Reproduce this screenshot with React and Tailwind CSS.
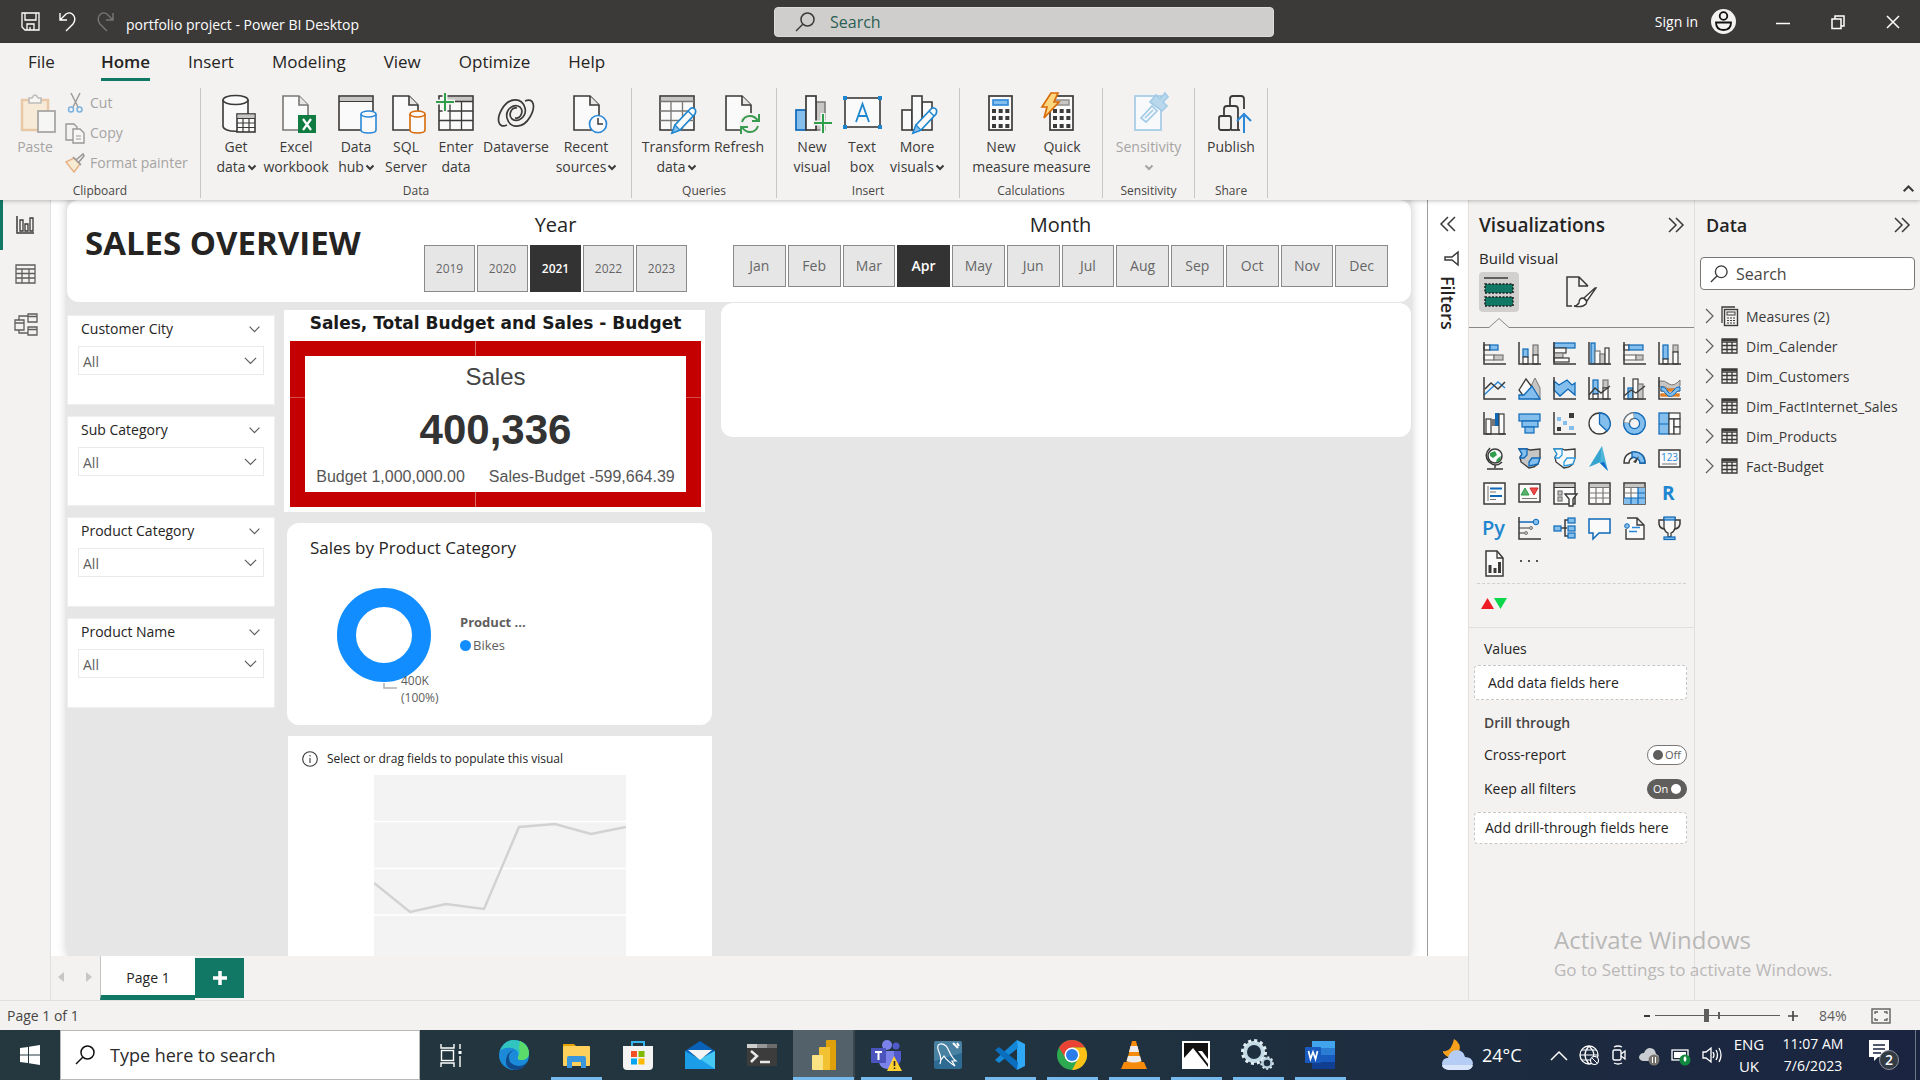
import React from "react";

const D = "#3b3a39";
const B = "#0f69b8";
const L = "#83beec";
const G = "#c8c6c4";
const M = "#797775";
const W = "#fafafa";

const Svg = ({ w = 40, h = 40, box, children, className = "" }) => (
  <svg
    width={w}
    height={h}
    viewBox={box || `0 0 ${w} ${h}`}
    fill="none"
    aria-hidden="true"
    className={"block shrink-0 overflow-visible " + className}
  >
    {children}
  </svg>
);

const Chevron = ({ w = 8, h = 5, color = D, sw = 2 }) => (
  <Svg w={w} h={h} box="0 0 8 5">
    <path d="M0.5 0.5L4 4L7.5 0.5" stroke={color} strokeWidth={sw} vectorEffect="non-scaling-stroke" />
  </Svg>
);

const Magnifier = ({ size = 20, color = D }) => (
  <Svg w={size} h={size} box="0 0 20 20">
    <circle cx="12.5" cy="7.5" r="6.5" stroke={color} strokeWidth="1.5" />
    <path d="M8 12L1 19" stroke={color} strokeWidth="1.5" />
  </Svg>
);

/* ---------- ribbon icons ---------- */
const Doc = ({ x = 6, stroke = D }) => (
  <g stroke={stroke} strokeWidth="1.6">
    <path d={`M${x + 1} 3H${x + 17}L${x + 26} 12V37H${x + 1}Z`} fill={W} />
    <path d={`M${x + 17} 3V12H${x + 26}`} fill="#e8e6e4" />
  </g>
);

const Cyl = ({ x, y, w, h, stroke, fill = W }) => (
  <g stroke={stroke} strokeWidth="1.6" fill={fill}>
    <path d={`M${x} ${y + 3}V${y + h - 3}c0 4 ${w} 4 ${w} 0V${y + 3}`} />
    <ellipse cx={x + w / 2} cy={y + 3} rx={w / 2} ry="3" />
  </g>
);

const Pencil = () => (
  <g>
    <path d="M34 16L19 32L16 40L24 37L39 21Q41 16 37 15Q35 14.500 34 16Z" fill={W} stroke="#1e86cf" strokeWidth="1.7" />
    <path d="M19 32L24 37L16 40Z" fill={L} stroke="#1e86cf" strokeWidth="1.2" />
    <path d="M32 18L37 23" stroke="#1e86cf" strokeWidth="1.4" />
  </g>
);

const CalcBody = ({ x = 7, w = 25, screen = "#2b88d8" }) => (
  <g>
    <rect x={x + 1} y="3" width={w - 2} height="34" fill={W} stroke={D} strokeWidth="1.7" />
    <rect x={x + 5} y="7" width={w - 10} height="5" fill={screen === "#979593" ? G : L} stroke={screen} strokeWidth="1.6" />
    {[16, 23, 31].map((y) =>
      [0, 1, 2].map((c) => <rect key={`${y}-${c}`} x={x + 4 + c * ((w - 5) / 3)} y={y} width="4" height="4" fill={D} />)
    )}
  </g>
);

const icons = {
  paste: (
    <Svg className="opacity-50">
      <g transform="translate(2 0)">
        <rect x="5" y="7" width="26" height="30" fill="#fbe6c0" stroke="#e0a15c" strokeWidth="2.5" />
        <path d="M12 10V5H15Q18 -1 21 5H24V10Z" fill={W} stroke="#8a8886" strokeWidth="1.6" />
        <rect x="21" y="18" width="17" height="21" fill={W} stroke="#605e5c" strokeWidth="1.8" />
      </g>
    </Svg>
  ),
  getdata: (
    <Svg>
      <path d="M7 7V33c0 7 25 7 25 0V7" fill={W} stroke={D} strokeWidth="1.6" />
      <ellipse cx="19.500" cy="7" rx="12.500" ry="4.500" fill={W} stroke={D} strokeWidth="1.6" />
      <rect x="21" y="21" width="18" height="18" fill={W} stroke={D} strokeWidth="1.6" />
      <rect x="21.500" y="21.500" width="17" height="3.500" fill={G} />
      <path d="M21 25.500H39M21 30H39M21 34.500H39M27 25V39M33 25V39" stroke={D} strokeWidth="1.2" />
    </Svg>
  ),
  excel: (
    <Svg>
      <Doc x={6} stroke="#797775" />
      <rect x="22" y="22" width="18" height="18" fill="#107c41" />
      <path d="M27 26L35 37M35 26L27 37" stroke="white" strokeWidth="2.2" />
    </Svg>
  ),
  hub: (
    <Svg>
      <rect x="3" y="3" width="34" height="34" fill={W} stroke={D} strokeWidth="1.6" />
      <rect x="4" y="4" width="32" height="4" fill={G} />
      <path d="M3 8.500H37" stroke={D} strokeWidth="1.2" />
      <Cyl x={25} y={18} w={15} h={22} stroke="#2b88d8" />
    </Svg>
  ),
  sql: (
    <Svg>
      <Doc x={6} />
      <Cyl x={24} y={18} w={15} h={22} stroke="#d86b0a" />
    </Svg>
  ),
  enter: (
    <Svg>
      <rect x="3" y="3" width="34" height="34" fill={W} stroke={D} strokeWidth="1.6" />
      <rect x="10" y="4" width="26" height="4" fill={G} />
      <path d="M3 8.500H37M3 18H37M3 27.500H37M14 9V37M25.500 9V37" stroke={D} strokeWidth="1.3" />
      <path d="M9 -1V19M-1 9H19" stroke="#f3f2f1" strokeWidth="5" />
      <path d="M9 0V18M0 9H18" stroke="#2f9e4a" strokeWidth="2" />
    </Svg>
  ),
  dataverse: (
    <Svg>
      <g stroke={D} strokeWidth="1.7">
        <path d="M11 32C2 36 0 26 6 16C13 4 26 4 29 15C31 24 22 30 16 26C12 22 15 14 21 15" />
        <path d="M29 8C38 4 40 14 34 24C27 36 14 36 11 25C9 16 18 10 24 14C28 18 25 26 19 25" />
      </g>
    </Svg>
  ),
  recent: (
    <Svg>
      <Doc x={7} />
      <circle cx="32" cy="31" r="8.500" fill={W} stroke="#2b88d8" strokeWidth="1.7" />
      <path d="M32 25V31H37" stroke={D} strokeWidth="1.5" />
    </Svg>
  ),
  transform: (
    <Svg>
      <rect x="4" y="3" width="34" height="34" fill={W} stroke={D} strokeWidth="1.6" />
      <rect x="5" y="4" width="32" height="4" fill={G} />
      <path d="M4 8.500H38M4 18H38M4 27.500H38M15 9V37M26.500 9V37" stroke={M} strokeWidth="1.3" />
      <Pencil />
    </Svg>
  ),
  refresh: (
    <Svg>
      <Doc x={6} />
      <circle cx="31" cy="31" r="11" fill="#f3f2f1" />
      <path d="M23 29Q25 23 31 23Q36 23 39 28M39 33Q37 39 31 39Q26 39 23 34" stroke="#3a9a50" strokeWidth="2" />
      <path d="M40 21V28H33M22 41V34H29" stroke="#3a9a50" strokeWidth="2" />
    </Svg>
  ),
  newvisual: (
    <Svg>
      <rect x="24" y="9" width="9" height="28" fill={G} stroke={M} strokeWidth="1.5" />
      <rect x="4" y="17" width="10" height="20" fill={L} stroke={B} strokeWidth="1.7" />
      <rect x="14" y="3" width="10" height="34" fill={W} stroke={D} strokeWidth="1.7" />
      <path d="M31 20V40M21 30H40" stroke="#f3f2f1" strokeWidth="5" />
      <path d="M31 21V40M22 30H40" stroke="#2f9e4a" strokeWidth="2" />
    </Svg>
  ),
  textbox: (
    <Svg>
      <rect x="3" y="5" width="35" height="29" fill={W} stroke={D} strokeWidth="1.6" />
      <path d="M14 29L20.500 11L27 29M16 23H25" stroke="#1e86cf" strokeWidth="1.8" />
      {[[1, 3], [36, 3], [1, 32], [36, 32]].map(([x, y]) => (
        <rect key={`${x}-${y}`} x={x} y={y} width="4" height="4" fill="#1e86cf" />
      ))}
    </Svg>
  ),
  more: (
    <Svg>
      <rect x="25" y="9" width="10" height="28" fill={W} stroke={D} strokeWidth="1.6" />
      <rect x="5" y="17" width="10" height="20" fill={W} stroke={D} strokeWidth="1.6" />
      <rect x="15" y="3" width="10" height="34" fill={W} stroke={D} strokeWidth="1.6" />
      <Pencil />
    </Svg>
  ),
  measure: (
    <Svg>
      <CalcBody />
    </Svg>
  ),
  quick: (
    <Svg>
      <CalcBody x={7} w={25} screen="#979593" />
      <path d="M9 0H16L12 9H17L2 25L5 14H0Z" fill="#fcd77f" stroke="#d86b0a" strokeWidth="1.7" />
    </Svg>
  ),
  sensitivity: (
    <Svg>
      <g stroke="#a3cbe6" strokeWidth="1.7">
        <rect x="6" y="3" width="26" height="34" fill="#f7f9fb" />
        <path d="M12 25L23 13L28 18L17 29Z" fill="#f3f8fb" />
        <path d="M16 25L24 17" />
        <path d="M21 9L27 2L31 6L36 0L39 4L34 9L38 13L33 18Z" fill="#b9d8ec" />
      </g>
    </Svg>
  ),
  publish: (
    <Svg>
      <g stroke={D} strokeWidth="1.8">
        <path d="M19 12V6Q19 3 22 3H30Q33 3 33 6V16M13 22V16Q13 13 16 13H24Q27 13 27 16V37" />
        <rect x="8" y="23" width="12" height="14" rx="2" />
        <path d="M20 37H29" />
      </g>
      <path d="M33 40V21M26 28L33 21L40 28" stroke="#2b88d8" strokeWidth="2" />
    </Svg>
  ),
};

const ribbon = [
  {
    name: "Data",
    box: "w-[431px]",
    pad: "pl-[5px]",
    items: [
      ["getdata", "Get", "data", true, "w-[60px]"],
      ["excel", "Excel", "workbook", false, "w-[60px]"],
      ["hub", "Data", "hub", true, "w-[60px]"],
      ["sql", "SQL", "Server", false, "w-[40px]"],
      ["enter", "Enter", "data", false, "w-[60px]"],
      ["dataverse", "Dataverse", "", false, "w-[60px]"],
      ["recent", "Recent", "sources", true, "w-[80px]"],
    ],
  },
  {
    name: "Queries",
    box: "w-[145px]",
    pad: "pl-[6px]",
    items: [
      ["transform", "Transform", "data", true, "w-[76px]"],
      ["refresh", "Refresh", "", false, "w-[50px]"],
    ],
  },
  {
    name: "Insert",
    box: "w-[183px]",
    pad: "pl-[10px]",
    items: [
      ["newvisual", "New", "visual", false, "w-[50px]"],
      ["textbox", "Text", "box", false, "w-[50px]"],
      ["more", "More", "visuals", true, "w-[60px]"],
    ],
  },
  {
    name: "Calculations",
    box: "w-[143px]",
    pad: "pl-[11px]",
    items: [
      ["measure", "New", "measure", false, "w-[60px]"],
      ["quick", "Quick", "measure", false, "w-[62px]"],
    ],
  },
  { name: "Sensitivity", box: "w-[92px]", pad: "", items: [["sensitivity", "Sensitivity", "", true, "w-[91px] text-[#a6a4a2]"]] },
  { name: "Share", box: "w-[73px]", pad: "", items: [["publish", "Publish", "", false, "w-[72px]"]] },
];

const RibbonGroup = ({ name, box, pad, items, children }) => (
  <div role="group" aria-label={name} className={"flex h-[110px] shrink-0 flex-col border-r border-[#c8c6c4] " + box}>
    {children || (
      <div className={"flex items-start " + pad}>
        {items.map(([id, a, b, drop, w]) => (
          <button key={id} className={"flex shrink-0 flex-col items-center pt-[5px] text-[14px] leading-5 whitespace-nowrap " + w}>
            {icons[id]}
            <span className="mt-1">{a}</span>
            <span className="flex h-5 items-center gap-0.5">
              {b}
              {drop && <Chevron color={id === "sensitivity" ? "#a6a4a2" : D} />}
            </span>
          </button>
        ))}
      </div>
    )}
    <div className="mt-auto text-center text-[12px] leading-[14px] text-[#484644]">{name}</div>
  </div>
);

/* ---------- visualization gallery ---------- */
const Axis = () => <path d="M1 0V22H23" stroke={D} strokeWidth="1.5" />;
const R = ({ a, f = W, s = D, sw = 1.2 }) => (
  <rect x={a[0]} y={a[1]} width={a[2]} height={a[3]} fill={f} stroke={s} strokeWidth={sw} />
);

const gallery = [
  ["Stacked bar chart", <><R a={[1, 3, 6, 5]} /><R a={[7, 3, 8, 5]} f={L} s={B} /><R a={[1, 13, 10, 5]} s={M} /><R a={[11, 13, 9, 5]} f={G} s={M} /><Axis /></>],
  ["Stacked column chart", <><R a={[5, 7, 5, 8]} f={L} s={B} /><R a={[5, 15, 5, 7]} /><R a={[15, 3, 5, 10]} f={G} s={M} /><R a={[15, 13, 5, 9]} /><Axis /></>],
  ["Clustered bar chart", <><R a={[1, 1, 21, 5]} f={L} s={B} /><R a={[1, 6, 12, 5]} /><R a={[1, 11, 9, 5]} f={G} s={M} /><R a={[1, 16, 15, 4]} /><Axis /></>],
  ["Clustered column chart", <><R a={[3, 1, 4, 21]} f={L} s={B} /><R a={[7, 9, 5, 13]} s={M} /><R a={[12, 12, 5, 10]} f={G} s={M} /><R a={[17, 6, 4, 16]} /><Axis /></>],
  ["100% stacked bar chart", <><R a={[1, 3, 5, 5]} /><R a={[6, 3, 14, 5]} f={L} s={B} /><R a={[1, 13, 12, 5]} s={M} /><R a={[13, 13, 7, 5]} f={G} s={M} /><Axis /></>],
  ["100% stacked column chart", <><R a={[5, 3, 5, 14]} f={L} s={B} /><R a={[5, 17, 5, 5]} /><R a={[15, 3, 5, 7]} f={G} s={M} /><R a={[15, 10, 5, 12]} /><Axis /></>],
  ["Line chart", <><path d="M1 18L15 5L22 11" stroke="#2b88d8" strokeWidth="1.5" /><path d="M2 12L8 6L15 12L22 5" stroke={D} strokeWidth="1.5" /><Axis /></>],
  ["Area chart", <><path d="M11 13L17 1L22 11V22H16Z" fill={G} stroke={M} /><path d="M1 13L8 2L14 10L6 20Z" fill={W} stroke={D} strokeWidth="1.3" /><path d="M1 22V18L6 18L14 9L22 22Z" fill={L} stroke={B} strokeWidth="1.3" /></>],
  ["Stacked area chart", <><path d="M1 4L6 8L14 3L19 8L22 6V18L15 12L7 19L1 13Z" fill={L} stroke={B} strokeWidth="1.3" /><Axis /></>],
  ["Line and stacked column chart", <><R a={[5, 3, 5, 14]} f={L} s={B} /><R a={[5, 17, 5, 5]} /><R a={[15, 3, 5, 8]} f={G} s={M} /><R a={[15, 11, 5, 11]} /><path d="M1 18L7 11L13 16L22 9" stroke={D} strokeWidth="1.4" /><Axis /></>],
  ["Line and clustered column chart", <><R a={[5, 11, 5, 11]} f={L} s={B} /><R a={[10, 2, 5, 20]} /><R a={[15, 7, 5, 15]} f={G} s={M} /><path d="M1 19L8 13L13 16L22 9" stroke={D} strokeWidth="1.4" /><Axis /></>],
  ["Ribbon chart", <><path d="M1 4Q7 3 11 7Q16 10 22 3V9Q16 15 11 13Q7 8 1 10Z" fill={G} stroke={M} /><R a={[3, 12, 18, 2]} f="#f8a94b" s="#d86b0a" /><R a={[3, 17, 18, 2]} f="#f8a94b" s="#d86b0a" /><path d="M3 10Q7 9 10 15Q12 18 15 14Q18 9 22 10V14Q19 13 17 17Q12 22 8 17Q6 13 3 14Z" fill={L} stroke={B} /><Axis /></>],
  ["Waterfall chart", <><R a={[3, 7, 5, 15]} /><rect x="8" y="7" width="5" height="7" fill={M} /><rect x="12" y="1" width="4" height="13" fill={B} /><R a={[16, 2, 5, 20]} /><Axis /></>],
  ["Funnel chart", <><R a={[1, 2, 21, 7]} f={L} s={B} /><R a={[4, 9, 16, 6]} f={L} s={B} /><R a={[7, 15, 9, 6]} f={L} s={B} /></>],
  ["Scatter chart", <><rect x="4" y="5" width="4" height="4" fill={L} /><rect x="10" y="9" width="4" height="4" fill={L} /><rect x="16" y="14" width="5" height="4" fill={L} /><rect x="16" y="1" width="5" height="5" fill={D} /><rect x="4" y="15" width="4" height="4" fill={D} /><Axis /></>],
  ["Pie chart", <><circle cx="11.500" cy="11.500" r="10.500" fill={W} stroke={D} strokeWidth="1.3" /><path d="M11.500 1V12L19 19A10.500 10.500 0 0 0 11.500 1Z" fill={L} stroke={B} strokeWidth="1.3" /></>],
  ["Donut chart", <><circle cx="11.500" cy="11.500" r="8" stroke={B} strokeWidth="7" /><circle cx="11.500" cy="11.500" r="8" stroke={L} strokeWidth="4.500" /><path d="M3.500 11A8 8 0 0 1 11 3.500" stroke={M} strokeWidth="7" /><path d="M3.500 10.500A8 8 0 0 1 10.500 3.500" stroke={W} strokeWidth="4.500" /></>],
  ["Treemap", <><R a={[1, 1, 10, 21]} f={L} s={B} /><path d="M1 12H11" stroke={B} /><R a={[11, 1, 11, 6]} /><R a={[11, 7, 5, 15]} s={D} /><R a={[16, 7, 6, 8]} /><R a={[16, 15, 6, 7]} /></>],
  ["Map", <><circle cx="12" cy="9" r="7" fill={W} stroke={D} strokeWidth="1.5" /><path d="M7 6L12 4L14 8L10 11L7 9ZM14 12L18 9L17 14L13 15Z" fill="#2f9e4a" /><path d="M7 1Q0 8 6 15Q13 21 19 15M12 18V21M4 22H20" stroke={D} strokeWidth="1.5" /></>],
  ["Filled map", <><path d="M1 2H9L12 3L22 2V11L20 17L16 20L11 21L3 15L2 10L4 7Z" fill={G} stroke={D} strokeWidth="1.3" /><path d="M1 2H9V8L6 11H2L4 7ZM11 19V15L14 11H22L20 17L16 18Z" fill={L} stroke={B} strokeWidth="1.3" /></>],
  ["Shape map", <><path d="M1 2H9L12 3L22 2V11L20 17L16 20L11 21L3 15L2 10L4 7Z" fill={W} stroke={D} strokeWidth="1.3" /><path d="M1 2H9V8L6 11H2L4 7ZM11 19V15L14 11H22L20 17L16 18Z" fill={W} stroke="#2b9be0" strokeWidth="1.3" /></>],
  ["Azure map", <><path d="M14 -1L1 20L13 15Z" fill="#35a5cf" /><path d="M14 -1L20 24L12 16Z" fill="#4bb5dc" /><path d="M12 16L16 15L20 24Z" fill="#0f69c8" /></>],
  ["Gauge", <><path d="M1 16Q1 6 11.500 5Q22 6 22 16H17Q17 11 11.500 10Q6 11 6 16Z" fill={W} stroke={D} strokeWidth="1.4" /><path d="M9 5Q21 4 22 16H17Q17 11 9 10Z" fill={L} stroke={B} strokeWidth="1.4" /><path d="M10 15L16 9L13 16Z" fill={D} /></>],
  ["Card", <><R a={[1, 3, 21, 17]} sw={1.5} /><text x="11.500" y="14" fontSize="10" textAnchor="middle" fill="#2b88d8" fontFamily="Open Sans, sans-serif">123</text><path d="M4 17H19" stroke={M} /></>],
  ["Multi-row card", <><R a={[1, 1, 21, 21]} sw={1.5} /><path d="M5 4V19" stroke={M} /><path d="M7 6.500H19M7 14H19" stroke={B} strokeWidth="2" /><path d="M7 10H13M7 17.500H13" stroke={M} /></>],
  ["KPI", <><R a={[1, 2, 21, 18]} sw={1.5} /><path d="M7 6L11 13H3Z" fill="#5bb06e" stroke="#2f9e4a" /><path d="M12 6H20L16 13Z" fill="#f04a4a" stroke="#d02a2a" /><path d="M4 16.500H19" stroke={M} /></>],
  ["Slicer", <><R a={[1, 1, 21, 21]} sw={1.5} /><rect x="2" y="2" width="19" height="3" fill={G} /><path d="M1 5.500H22" stroke={D} /><R a={[5, 9, 4, 4]} f={G} s={M} /><R a={[5, 15, 4, 4]} f={G} s={M} /><path d="M12 12H24L20 17V24H16V17Z" fill={W} stroke={D} strokeWidth="1.4" /></>],
  ["Table", <><R a={[1, 1, 21, 21]} sw={1.5} /><rect x="2" y="2" width="19" height="3" fill={G} /><path d="M1 5.500H22M1 11H22M1 16H22M8 5V22M15 5V22" stroke={M} strokeWidth="1.2" /></>],
  ["Matrix", <><R a={[1, 1, 21, 21]} sw={1.5} /><rect x="2" y="2" width="19" height="3" fill={G} /><path d="M15 6H22V22H1V16H15Z" fill={L} /><path d="M1 5.500H22M1 11H15M8 5V16" stroke={M} strokeWidth="1.2" /><path d="M15 5V22M1 16H22M8 16V22M15 11H22" stroke={B} strokeWidth="1.2" /></>],
  ["R script visual", <text x="4" y="18" fontSize="19" fontWeight="700" fill="#1e86cf" fontFamily="Open Sans, sans-serif">R</text>],
  ["Python visual", <text x="-1" y="18" fontSize="20" fontWeight="600" fill="#1e86cf" fontFamily="Open Sans, sans-serif">Py</text>],
  ["Key influencers", <><path d="M1 5H15" stroke={B} strokeWidth="1.5" /><path d="M1 11H12M1 16H8" stroke={M} strokeWidth="1.3" /><circle cx="18" cy="5" r="2.800" fill={L} stroke={B} /><circle cx="13" cy="11" r="1.500" fill={G} stroke={M} /><circle cx="8" cy="16" r="1.500" fill={G} stroke={M} /><Axis /></>],
  ["Decomposition tree", <><path d="M8 11H14M18 3H12V19H18" stroke={D} strokeWidth="1.5" /><R a={[1, 9, 7, 5]} f={L} s={B} /><R a={[15, 1, 7, 5]} f={L} s={B} /><R a={[15, 9, 7, 5]} f={L} s={B} /><R a={[15, 16, 7, 5]} f={L} s={B} /></>],
  ["Q&A", <path d="M1 2H22V16H11L5 22V16H1Z" fill={W} stroke={B} strokeWidth="1.5" />],
  ["Smart narrative", <><path d="M4 1H14L21 8V22H3V12M14 1V8H21" fill={W} stroke={D} strokeWidth="1.4" /><circle cx="4" cy="9" r="2.300" fill={L} stroke={B} /><path d="M9 10.500H17M6 14.500H14" stroke="#2b88d8" strokeWidth="1.3" /></>],
  ["Goals", <><path d="M6 3H1V7Q2 12 7 12M17 3H22V7Q21 12 16 12" stroke={D} strokeWidth="1.5" /><path d="M6 1H17V11Q16 15 13 16V20H10V16Q7 15 6 11Z" fill={W} stroke={D} strokeWidth="1.3" /><R a={[6, 0, 11, 3]} f={L} s={B} /><R a={[6, 20, 11, 2.5]} f={L} s={B} /></>],
  ["Paginated report", <><path d="M3 -1H14L20 6V24H3Z" fill={W} stroke={D} strokeWidth="1.5" /><path d="M14 -1V6H20" stroke={D} strokeWidth="1.3" /><path d="M7 21V13M12 21V16M16.500 21V10" stroke={D} strokeWidth="3" /></>],
  ["Get more visuals", <g fill="#201f1e"><circle cx="3" cy="9" r="1" /><circle cx="11" cy="9" r="1" /><circle cx="19" cy="9" r="1" /></g>],
];

const TableIcon = () => (
  <Svg w={17} h={16}>
    <path d="M1 1H16V15H1ZM1 4H16M1 7.500H16M1 11.500H16M6 4V15M11 4V15" stroke={D} strokeWidth="1.3" />
    <path d="M1 2H16" stroke={D} strokeWidth="2" />
  </Svg>
);

const MeasureIcon = () => (
  <Svg w={17} h={20}>
    <path d="M1 17V1H14" stroke={D} strokeWidth="1.3" />
    <rect x="3.500" y="3.500" width="13" height="16" stroke={D} strokeWidth="1.4" />
    <rect x="6" y="6" width="8" height="3" stroke={D} />
    <path d="M6 12H14M6 14.500H14M6 17H14" stroke={D} strokeDasharray="2 1" strokeWidth="1.2" />
  </Svg>
);

const Double = ({ left }) => (
  <Svg w={16} h={16}>
    <path d={left ? "M8 1L1 8L8 15M15 1L8 8L15 15" : "M1 1L8 8L1 15M8 1L15 8L8 15"} stroke={D} strokeWidth="1.5" />
  </Svg>
);

/* ---------- report canvas ---------- */
const SlicerCard = ({ name }) => (
  <section className="h-[90px] border border-[#efefef] bg-white px-[10px] pt-0.5">
    <div className="flex items-center justify-between pr-[3px] pl-[3px]">
      <label htmlFor={name} className="text-[14px] leading-[22px] text-[#252423]">
        {name}
      </label>
      <Chevron w={13} h={7} color="#605e5c" sw={1.2} />
    </div>
    <div className="relative mt-[6px] flex items-center">
      <select id={name} className="h-[29px] w-full appearance-none border border-[#eaeaea] bg-white pt-0.5 pl-1 text-[14px] text-[#605e5c]">
        <option>All</option>
      </select>
      <span className="pointer-events-none absolute right-1.5">
        <Chevron w={15} h={8} color="#605e5c" sw={1.2} />
      </span>
    </div>
  </section>
);

const pick = (on) =>
  on
    ? "border-[#333333] bg-[#333333] font-semibold text-white"
    : "border-[#8a8a8a] bg-[#e6e6e6] text-[#666666]";

const Report = () => (
  <main className="flex min-w-0 flex-1 overflow-hidden bg-white px-4">
    <div className="min-w-0 flex-1 bg-[#e6e6e6] shadow-[0_0_10px_rgba(0,0,0,0.22)]">
      <header className="flex h-[102px] items-start justify-between rounded-xl bg-white pr-[23px] pl-[18px]">
        <h1 className="mt-5 text-[33px] leading-[46px] font-bold whitespace-nowrap text-[#252423]">SALES OVERVIEW</h1>
        <div className="ml-auto mr-[46px] pt-[9px]">
          <div className="text-center text-[20px] leading-8 text-[#252423]">Year</div>
          <div className="mt-1 flex gap-0.5">
            {["2019", "2020", "2021", "2022", "2023"].map((y) => (
              <button key={y} className={"h-[47px] w-[51px] border text-[12px] " + pick(y === "2021")}>
                {y}
              </button>
            ))}
          </div>
        </div>
        <div className="w-[655px] pt-[9px]">
          <div className="text-center text-[20px] leading-8 text-[#252423]">Month</div>
          <div className="mt-1 grid grid-cols-12 gap-0.5">
            {["Jan", "Feb", "Mar", "Apr", "May", "Jun", "Jul", "Aug", "Sep", "Oct", "Nov", "Dec"].map((m) => (
              <button key={m} className={"h-[42px] border pb-0.5 text-[14px] " + pick(m === "Apr")}>
                {m}
              </button>
            ))}
          </div>
        </div>
      </header>

      <div className="flex">
        <div className="flex w-52 shrink-0 flex-col gap-[11px] pt-[13px]">
          {["Customer City", "Sub Category", "Product Category", "Product Name"].map((n) => (
            <SlicerCard key={n} name={n} />
          ))}
        </div>

        <div className="flex w-[437px] shrink-0 flex-col gap-[11px] pt-2 pl-[9px]">
          <section className="w-[421px] bg-white pr-1 pb-[5px] pl-[6px]">
            <h2 className="pb-1 text-center font-['DejaVu_Sans',sans-serif] text-[17px] leading-[27px] font-bold whitespace-nowrap text-[#1b1b1b]">
              Sales, Total Budget and Sales - Budget
            </h2>
            <div className="relative border-[15px] border-[#c40000] bg-white pt-[5px] text-center font-['Liberation_Sans',Arial,sans-serif]">
              <span className="absolute -top-[15px] left-[170px] h-[15px] w-px bg-[#dc6a6a]" />
              <span className="absolute -bottom-[15px] left-[170px] h-[15px] w-px bg-[#dc6a6a]" />
              <span className="absolute top-[41px] -left-[15px] h-px w-[15px] bg-[#d44a4a]" />
              <span className="absolute top-[41px] -right-[15px] h-px w-[15px] bg-[#d44a4a]" />
              <div className="text-[24px] leading-8 text-[#444444]">Sales</div>
              <div className="mt-[7px] text-[42px] leading-[60px] font-bold text-[#333333]">400,336</div>
              <div className="mt-[3px] flex justify-center gap-6 pb-px text-[16px] leading-7 whitespace-nowrap text-[#555555]">
                <span>Budget 1,000,000.00</span>
                <span>Sales-Budget -599,664.39</span>
              </div>
            </div>
          </section>

          <section className="ml-[3px] h-[202px] rounded-xl bg-white pt-[14px] pl-[23px]">
            <h2 className="text-[17px] leading-[22px] text-[#252423]">Sales by Product Category</h2>
            <div className="mt-[29px] flex gap-7">
              <svg width="122" height="120" viewBox="0 0 122 120" className="block overflow-visible" role="img" aria-label="Bikes 400K (100%)">
                <circle cx="74" cy="47" r="37.500" fill="none" stroke="#118dff" strokeWidth="19" />
                <path d="M74 95V100H87" fill="none" stroke="#b3b0ad" strokeWidth="1.5" />
                <g fontSize="12" fill="#605e5c" fontFamily="Open Sans, sans-serif">
                  <text x="91" y="97">400K</text>
                  <text x="91" y="114">(100%)</text>
                </g>
              </svg>
              <div className="pt-[23px] text-[13px] leading-[23px] text-[#605e5c]">
                <div className="font-bold">Product ...</div>
                <div className="flex items-center gap-0.5">
                  <span className="size-[11px] rounded-full bg-[#118dff]" />
                  Bikes
                </div>
              </div>
            </div>
          </section>

          <section className="ml-1 bg-white px-[14px] pt-[13px]">
            <div className="flex items-center gap-[9px] text-[12px] leading-5 text-[#252423]">
              <Svg w={16} h={16}>
                <circle cx="8" cy="8" r="7.300" stroke={D} strokeWidth="1.1" />
                <path d="M8 7V12M8 4V5.500" stroke={D} strokeWidth="1.1" />
              </Svg>
              Select or drag fields to populate this visual
            </div>
            <svg width="252" height="200" viewBox="0 0 252 200" className="mt-[6px] ml-[72px] block" aria-hidden="true">
              <rect width="252" height="200" fill="#f3f3f3" />
              <path d="M0 46.500H252M0 93.500H252M0 140H252" stroke="white" strokeWidth="1.500" />
              <path d="M0 108L36 137L72 129L110 134L145 52L181 49L217 59L252 52" fill="none" stroke="#d2d2d2" strokeWidth="2.500" />
            </svg>
          </section>
        </div>

        <section className="mt-px ml-[9px] h-[134px] flex-1 rounded-xl bg-white" />
      </div>
    </div>
  </main>
);

const Toggle = ({ label, on }) => (
  <label className="flex items-center justify-between">
    {label}
    <input type="checkbox" role="switch" defaultChecked={on} className="peer sr-only" />
    <span
      className={
        "flex h-5 w-10 items-center justify-between rounded-full border px-[5px] text-[11px] " +
        (on ? "border-[#605e5c] bg-[#605e5c] text-white" : "flex-row-reverse border-[#797775] bg-white text-[#605e5c]")
      }
    >
      {on ? "On" : "Off"}
      <span className={"size-[10px] rounded-full " + (on ? "bg-white" : "bg-[#605e5c]")} />
    </span>
  </label>
);

const Visualizations = () => (
  <aside className="flex w-[226px] shrink-0 flex-col border-r border-[#e1dfdd]">
    <div className="flex items-center justify-between pt-[11px] pr-[10px] pl-[10px]">
      <h2 className="text-[19px] leading-7 font-semibold">Visualizations</h2>
      <button aria-label="Collapse visualizations">
        <Double />
      </button>
    </div>
    <div className="mt-[7px] pl-[10px] text-[15px] leading-6">Build visual</div>
    <div className="mt-[2px] flex gap-[42px] pl-[10px]">
      <button aria-label="Build visual" className="flex size-10 items-center justify-center rounded-sm bg-[#d2d0ce]">
        <Svg w={30} h={32}>
          <path d="M0 2H24" stroke={D} strokeWidth="1.5" />
          <rect x="1" y="8" width="28" height="9" fill="#117865" stroke="#201f1e" strokeWidth="1.5" strokeDasharray="2 1.500" />
          <rect x="1" y="21" width="28" height="9" fill="#117865" stroke="#201f1e" strokeWidth="1.5" strokeDasharray="2 1.500" />
        </Svg>
      </button>
      <button aria-label="Format visual" className="flex size-10 items-center justify-center">
        <Svg w={32} h={32}>
          <path d="M7 30H2V1H14L23 10M14 1V10H23" stroke={D} strokeWidth="1.5" />
          <path d="M30 12L19 22L22 25L31 12Z" stroke={D} strokeWidth="1.4" fill="white" />
          <path d="M18 22Q14 22 14 27Q12 30 9 30Q17 32 21 28Q23 25 18 22Z" stroke={D} strokeWidth="1.4" fill="white" />
        </Svg>
      </button>
    </div>
    <div className="mt-[6px] flex h-[10px]">
      <svg width="41" height="10" className="block" aria-hidden="true">
        <path d="M0 9.500H20L30 0.500L40 9.500H41" fill="none" stroke="#8a8886" />
      </svg>
      <div className="flex-1 border-b border-[#8a8886]" />
    </div>
    <div className="mx-2 mt-[14px] grid grid-cols-[repeat(6,35px)] gap-y-3 border-b border-dashed border-[#d2d0ce] pb-2 pl-[6px]">
      {gallery.map(([n, art]) => (
        <button key={n} aria-label={n} title={n} className="size-[23px]">
          <Svg w={23} h={23}>{art}</Svg>
        </button>
      ))}
    </div>
    <div className="flex h-11 items-center border-b border-[#e1dfdd] pb-1 pl-3">
      <button aria-label="Variance visual">
        <Svg w={26} h={11}>
          <path d="M6.500 0L13 11H0Z" fill="#ed1c24" />
          <path d="M13 0H26L19.500 11Z" fill="#0cd64a" />
        </Svg>
      </button>
    </div>
    <div className="flex flex-col pr-[7px] pl-[5px] text-[14px] leading-5">
      <div className="mt-[11px] pl-[10px]">Values</div>
      <button className="mt-[6px] h-[35px] rounded-sm border border-dashed border-[#c8c6c4] bg-white pl-[13px] text-left">Add data fields here</button>
      <div className="mt-[13px] pl-[10px] font-semibold text-[#484644]">Drill through</div>
      <div className="mt-3 flex flex-col gap-[14px] pl-[10px]">
        <Toggle label="Cross-report" />
        <Toggle label="Keep all filters" on />
      </div>
      <button className="mt-[13px] h-8 rounded-sm border border-dashed border-[#c8c6c4] bg-white pl-[10px] text-left whitespace-nowrap">
        Add drill-through fields here
      </button>
    </div>
  </aside>
);

const DataPane = () => (
  <aside className="w-[225px] shrink-0">
    <div className="flex items-center justify-between pt-[11px] pr-[10px] pl-[11px]">
      <h2 className="text-[18px] leading-7 font-semibold">Data</h2>
      <button aria-label="Collapse data">
        <Double />
      </button>
    </div>
    <label className="mt-[18px] mr-[5px] ml-[5px] flex h-[33px] items-center gap-2 rounded-sm border border-[#797775] bg-white pl-[9px]">
      <Magnifier size={18} />
      <input aria-label="Search data" placeholder="Search" className="w-full min-w-0 bg-transparent text-[16px] outline-none placeholder:text-[#484644]" />
    </label>
    <ul className="mt-[11px] text-[14px] text-[#3b3a39]">
      {["Measures (2)", "Dim_Calender", "Dim_Customers", "Dim_FactInternet_Sales", "Dim_Products", "Fact-Budget"].map((n, i) => (
        <li key={n}>
          <button className="flex h-[30px] w-full items-center gap-2 pl-[11px] whitespace-nowrap">
            <Svg w={7} h={14}>
              <path d="M0 0L7 7L0 14" stroke="#605e5c" strokeWidth="1.2" />
            </Svg>
            {i === 0 ? <MeasureIcon /> : <TableIcon />}
            {n}
          </button>
        </li>
      ))}
    </ul>
  </aside>
);

/* ---------- taskbar ---------- */
const apps = [
  ["Task View", 0, <g stroke="white" strokeWidth="1.4"><path d="M5 5V9H18V5M5 28V24H18V28" /><rect x="5.500" y="11.500" width="12" height="10" /><path d="M24 5V10M24 17V28" /><path d="M22.500 13.500H25.500" strokeWidth="3" /></g>],
  ["Edge", 0, <><circle cx="16" cy="16" r="15" fill="#1b8ad8" /><path d="M2 12Q6 1 16 1Q31 2 31 15Q30 21 23 21Q19 21 20 18Q22 11 14 9Q6 8 2 12Z" fill="#32c5c0" /><path d="M22 2Q31 6 31 15Q30 21 23 21Q19 21 20 18Q23 14 21 9Z" fill="#5bdc6a" /><path d="M11 17Q10 26 20 27Q26 27 29 23Q26 31 17 31Q7 30 8 21Q9 13 16 11Q11 14 11 17Z" fill="#114a8b" /></>],
  ["File Explorer", 1, <><path d="M3 5H14L17 8H3Z" fill="#e8a200" /><rect x="3" y="7" width="27" height="20" rx="1" fill="#ffd15c" /><path d="M7 29V19Q7 17 9 17H24Q26 17 26 19V29H21V23H12V29Z" fill="#3a96dd" /></>],
  ["Microsoft Store", 0, <><path d="M10 7V3H22V7" stroke="#35b5f0" strokeWidth="2" /><path d="M1 7H31V27Q31 31 27 31H5Q1 31 1 27Z" fill="#f3f3f3" /><rect x="9" y="12" width="6" height="6" fill="#f25022" /><rect x="16.500" y="12" width="6" height="6" fill="#7fba00" /><rect x="9" y="19.500" width="6" height="6" fill="#00a4ef" /><rect x="16.500" y="19.500" width="6" height="6" fill="#ffb900" /></>],
  ["Mail", 0, <><path d="M1 12L16 2L31 12V16H1Z" fill="#0a62b8" /><path d="M1 12L16 20L31 12V30H1Z" fill="#1b9de8" /><path d="M31 12L16 20L31 30Z" fill="#46c8f5" /><path d="M4 11H28L16 21Z" fill="#f4f4f4" /></>],
  ["Terminal", 0, <><rect x="1" y="5" width="30" height="22" rx="1" fill="#3c3c3c" /><rect x="1" y="5" width="10" height="4" fill="#cfcfcf" /><rect x="11" y="5" width="10" height="4" fill="#979797" /><rect x="21" y="5" width="10" height="4" fill="#6b6b6b" /><path d="M5 12L11 17L5 23M14 23H24" stroke="#e8e8e8" strokeWidth="2.500" /></>],
  ["Power BI Desktop", 2, <><rect x="19" y="1" width="10" height="30" rx="1" fill="#e0a00c" /><rect x="12" y="8" width="11" height="23" rx="1" fill="#f2c232" /><rect x="5" y="16" width="11" height="15" rx="1" fill="#fbe283" /></>],
  ["Teams", 1, <><circle cx="26" cy="7" r="3.500" fill="#5059c9" /><circle cx="17" cy="6" r="5" fill="#7b83eb" /><path d="M22 12H31V21Q30 26 25 26H22Z" fill="#5059c9" /><path d="M9 12H24V23Q23 30 17 30Q10 29 9 23Z" fill="#7b83eb" /><rect x="1" y="9" width="15" height="15" rx="1" fill="#4b53bc" /><path d="M5 13H12M8.500 13V21" stroke="white" strokeWidth="2" /><path d="M24 17L32 32H17Z" fill="#ffd030" /><path d="M24.500 22V27M24.500 28.500V30" stroke="#222" strokeWidth="1.600" /></>],
  ["MySQL Workbench", 0, <><rect x="2" y="2" width="28" height="28" rx="2" fill="#2d6b93" /><path d="M2 4Q2 2 4 2H28Q30 2 30 4V14L2 22Z" fill="#5b8fae" opacity=".6" /><path d="M8 25Q10 20 7 13Q4 6 8 5Q14 4 17 12Q20 19 24 22L20 22L23 27Q15 22 12 17L9 21" stroke="white" strokeWidth="1.200" /><path d="M21 4L26 9M25 4L27 7" stroke="white" strokeWidth="2" /></>],
  ["Visual Studio Code", 1, <><path d="M23 1L31 5V27L23 31Z" fill="#2fa8f5" /><path d="M23 1L24 9L5 24L1 21Z" fill="#1488d8" /><path d="M23 31L24 23L5 8L1 11Z" fill="#0a6dbd" /></>],
  ["Chrome", 1, <><circle cx="16" cy="16" r="15" fill="#2da94f" /><path d="M3 8.500A15 15 0 0 1 29 8.500H16L10 20Z" fill="#ea4335" /><path d="M29 8.500A15 15 0 0 1 16 31L22 20L16 8.500Z" fill="#fbc116" /><circle cx="16" cy="16" r="7.500" fill="white" /><circle cx="16" cy="16" r="6" fill="#2b7de9" /></>],
  ["VLC", 1, <><path d="M6 23H26L29 30H3Z" fill="#f58a0b" /><path d="M14 2H18L24 25Q16 29 8 25Z" fill="#f58a0b" /><path d="M12.500 7H19.500L21 13H11ZM10 17H22L23.500 22Q16 25 8.500 22Z" fill="#ececec" /></>],
  ["Photos", 3, <><rect x="3" y="3" width="26" height="26" fill="#111" stroke="white" strokeWidth="2" /><path d="M4 28V19L13 9L28 28Z" fill="white" /><path d="M18 12L22 12L28 20V25Z" fill="white" /></>],
  ["Services", 1, <><circle cx="12" cy="13" r="9" stroke="#c4dbe6" strokeWidth="4" /><circle cx="12" cy="13" r="11.500" stroke="#e4eff4" strokeWidth="3" strokeDasharray="3 3" /><circle cx="25" cy="24" r="4.500" stroke="#b8d0dd" strokeWidth="2.500" /><circle cx="25" cy="24" r="6" stroke="#e4eff4" strokeWidth="1.600" strokeDasharray="2 2" /></>],
  ["Word", 1, <><rect x="8" y="2" width="23" height="28" rx="1" fill="#2b7cd3" /><rect x="8" y="2" width="23" height="7" fill="#41a5ee" /><rect x="8" y="23" width="23" height="7" fill="#103f91" /><rect x="8" y="16" width="23" height="7" fill="#185abd" /><rect x="1" y="8" width="16" height="16" rx="1" fill="#185abd" /><path d="M4.500 12L6.500 20L9 13L11.500 20L13.500 12" stroke="white" strokeWidth="1.700" /></>],
];

const bars = { 0: "", 1: "w-[51px]", 2: "w-[61px]", 3: "w-[51px]" };

const Taskbar = () => (
  <footer className="flex h-[50px] shrink-0 items-stretch bg-linear-to-r from-[#25383f] via-[#21343f] to-[#1a2440] text-white">
    <button aria-label="Start" className="flex w-[60px] items-center justify-center">
      <Svg w={20} h={20}>
        <path d="M0 3L8 2V9.500H0ZM9 1.800L20 0V9.500H9ZM0 10.500H8V18L0 17ZM9 10.500H20V20L9 18.200Z" fill="white" />
      </Svg>
    </button>
    <label className="flex w-[360px] items-center gap-[15px] border border-[#b8b8b8] bg-white pl-[14px]">
      <Magnifier size={20} color="#111111" />
      <input aria-label="Search Windows" placeholder="Type here to search" className="min-w-0 flex-1 bg-transparent text-[18px] outline-none placeholder:text-[#2b2b2b]" />
    </label>
    <div className="ml-px flex">
      {apps.map(([name, state, art]) => (
        <button
          key={name}
          aria-label={name}
          className={"flex w-[62px] flex-col items-center justify-between pt-[9px] " + (state === 2 ? "border-r-2 border-[#39474f] bg-[#53626a]" : "")}
        >
          <Svg w={32} h={32}>{art}</Svg>
          <span className={"h-[3px] bg-[#76b9ed] " + bars[state]} />
        </button>
      ))}
    </div>
    <div className="ml-auto flex items-center">
      <Svg w={31} h={32}>
        <path d="M12 0Q20 4 17 14L6 18Q0 14 1 12Q9 14 12 0Z" fill="#f7a01c" />
        <path d="M7 31Q0 30 0 24Q1 19 6 19Q8 11 15 11Q22 12 23 18Q30 18 31 24Q30 31 24 31Z" fill="#b5cdf4" />
        <path d="M7 31Q0 30 0 26H31Q30 31 24 31Z" fill="#d8e5fb" />
      </Svg>
      <span className="ml-[9px] w-[69px] text-[18px]">24°C</span>
      <div className="flex items-center gap-3">
        <Svg w={16} h={9}>
          <path d="M0 9L8 1L16 9" stroke="white" strokeWidth="1.500" />
        </Svg>
        <Svg w={20} h={20}>
          <circle cx="10" cy="10" r="9" stroke="white" strokeWidth="1.300" />
          <path d="M1 10H19M3 5H17M3 15H13M10 1Q2 10 10 19M10 1Q17 8 14 12" stroke="white" strokeWidth="1.200" />
          <circle cx="15.500" cy="15.500" r="4" fill="#1b2840" stroke="white" strokeWidth="1.200" />
          <path d="M13 13L18 18" stroke="white" />
        </Svg>
        <Svg w={16} h={20}>
          <rect x="2" y="5" width="8" height="10" rx="1.500" stroke="white" strokeWidth="1.400" />
          <path d="M10 9L14 6V14L10 11M3 2Q7 0 11 2M3 18Q7 20 11 18" stroke="white" strokeWidth="1.300" />
        </Svg>
        <Svg w={20} h={20}>
          <path d="M4 16Q0 15 0 12Q1 8 5 8Q7 3 11 3Q16 3 17 9Q20 10 20 13Q19 16 16 16Z" fill="#c9ccd0" />
          <circle cx="15" cy="15" r="5.500" fill="#77736f" />
          <path d="M13.500 12V18M16.500 12V18" stroke="white" />
        </Svg>
        <Svg w={19} h={20}>
          <rect x="1" y="5" width="16" height="10" stroke="white" strokeWidth="1.300" />
          <rect x="3" y="7" width="12" height="6" fill="white" />
          <circle cx="14" cy="15" r="5.500" fill="#10893e" />
          <path d="M14 11Q17 14 14 17Q11 14 14 11Z" fill="white" />
        </Svg>
        <Svg w={20} h={20}>
          <path d="M1 7H4L9 3V17L4 13H1ZM11 7Q13 10 11 13M14 5Q17 10 14 15M17 3Q21 10 17 17" stroke="white" strokeWidth="1.300" />
        </Svg>
      </div>
      <div className="ml-[7px] w-10 text-center text-[15px] leading-[22px]">
        <div>ENG</div>
        <div>UK</div>
      </div>
      <div className="ml-2 w-[72px] text-center text-[14px] leading-[22px] whitespace-nowrap">
        <div>11:07 AM</div>
        <div>7/6/2023</div>
      </div>
      <button aria-label="2 notifications" className="ml-5 h-8">
        <Svg w={30} h={32}>
          <path d="M0 1H20V18H9L5 22V18H0Z" fill="white" />
          <path d="M4 6H16M4 10H16M4 14H12" stroke="#1b2440" strokeWidth="1.300" />
          <circle cx="20" cy="21" r="9.500" fill="#333b45" stroke="#8d9299" />
          <text x="20" y="26" fontSize="14" fontWeight="600" textAnchor="middle" fill="white" fontFamily="Open Sans, sans-serif">2</text>
        </Svg>
      </button>
      <span className="ml-4 h-full w-[5px] border-l border-[#6d7686]" />
    </div>
  </footer>
);

export default function App() {
  return (
    <div className="relative flex h-screen min-w-[1600px] flex-col overflow-hidden bg-[#f3f2f1] font-['Open_Sans','Noto_Sans',sans-serif] text-[#252423]">
      <header className="grid h-[43px] shrink-0 grid-cols-[774fr_500px_646fr] items-center bg-[#3b3a39] text-[14px] text-white">
        <div className="flex items-center pl-[21px]">
          <button aria-label="Save">
            <Svg w={19} h={19}>
              <path d="M1 1H18V18H4L1 15ZM4 1V8H15V1M6 18V12H13V18M9 15V18" stroke="white" strokeWidth="1.300" />
            </Svg>
          </button>
          <button aria-label="Undo" className="ml-[19px]">
            <Svg w={18} h={19}>
              <path d="M1 1V8H8M1 8L7 2Q12 -1 15 4Q17 8 14 12L7 19" stroke="white" strokeWidth="1.400" />
            </Svg>
          </button>
          <button aria-label="Redo" className="ml-[19px]">
            <Svg w={18} h={19}>
              <path d="M17 1V8H10M17 8L11 2Q6 -1 3 4Q1 8 4 12L11 19" stroke="#797775" strokeWidth="1.400" />
            </Svg>
          </button>
          <span className="ml-3 pt-[5px] whitespace-nowrap">portfolio project - Power BI Desktop</span>
        </div>
        <label className="flex h-[30px] items-center gap-[15px] rounded-sm border border-[#dddbd9] bg-[#d0cecc] pl-5">
          <Magnifier />
          <input aria-label="Search" placeholder="Search" className="min-w-0 flex-1 bg-transparent text-[16px] outline-none placeholder:text-[#2a5f53]" />
        </label>
        <div className="flex items-center justify-end pr-5">
          <button className="flex items-center gap-[13px]">
            Sign in
            <Svg w={25} h={25}>
              <circle cx="12.500" cy="12.500" r="12.500" fill="#f3f2f1" />
              <circle cx="12.500" cy="7" r="3.800" stroke="#111" strokeWidth="1.800" />
              <path d="M5 13.500H20Q20 21 12.500 21Q5 21 5 13.500Z" stroke="#111" strokeWidth="1.800" />
            </Svg>
          </button>
          <button aria-label="Minimize" className="ml-10">
            <Svg w={14} h={14}>
              <path d="M0 8.500H14" stroke="white" strokeWidth="1.500" />
            </Svg>
          </button>
          <button aria-label="Restore" className="ml-[41px]">
            <Svg w={14} h={14}>
              <path d="M1 4H10V13.500H1ZM4 4V1H13V11H10" stroke="white" strokeWidth="1.500" />
            </Svg>
          </button>
          <button aria-label="Close" className="ml-[41px]">
            <Svg w={14} h={14}>
              <path d="M1 1L13 13M13 1L1 13" stroke="white" strokeWidth="1.500" />
            </Svg>
          </button>
        </div>
      </header>

      <div className="relative z-10 shrink-0 bg-[#f3f2f1] shadow-[0_1px_4px_rgba(0,0,0,0.25)]">
        <nav className="flex h-[38px] gap-[38px] pl-7 text-[17px]">
          {["File", "Home", "Insert", "Modeling", "View", "Optimize", "Help"].map((t) => (
            <button
              key={t}
              className={
                "border-b-[3px] pt-[3px] " +
                (t === "Home" ? "border-[#117865] font-semibold" : "border-transparent") +
                (t === "File" ? " mr-2" : "")
              }
            >
              {t}
            </button>
          ))}
        </nav>
        <div className="flex items-start pt-[7px] pb-0.5 text-[#3b3a39]">
          <RibbonGroup name="Clipboard" box="w-[201px]">
            <div className="flex pl-[15px] text-[14px] leading-5 text-[#a6a4a2]">
              <button className="flex w-10 flex-col items-center pt-[5px]">
                {icons.paste}
                <span className="mt-1">Paste</span>
              </button>
              <div className="ml-[10px] flex flex-col">
                <button className="flex h-[30px] items-center gap-[5px]">
                  <Svg w={20} h={20} className="opacity-60">
                    <path d="M6 0L13 14M15 0L8 14" stroke="#605e5c" strokeWidth="1.400" />
                    <circle cx="6" cy="16.500" r="2.500" stroke="#2b88d8" strokeWidth="1.500" />
                    <circle cx="14.500" cy="16.500" r="2.500" stroke="#2b88d8" strokeWidth="1.500" />
                  </Svg>
                  Cut
                </button>
                <button className="flex h-[30px] items-center gap-[5px]">
                  <Svg w={20} h={20} className="opacity-60">
                    <path d="M1 1H9L12 4V17H1Z" stroke="#605e5c" strokeWidth="1.400" />
                    <path d="M8 6H15L19 10V20H8Z" fill={W} stroke="#605e5c" strokeWidth="1.400" />
                    <path d="M11 13H16M11 16H16" stroke="#605e5c" />
                  </Svg>
                  Copy
                </button>
                <button className="flex h-[30px] items-center gap-[5px] whitespace-nowrap">
                  <Svg w={20} h={20} className="opacity-60">
                    <path d="M1 9L9 5L15 11L9 19Z" fill="#fbe6c0" stroke="#e0883c" strokeWidth="1.400" />
                    <path d="M8 4L16 12M11 7L18 1L19 3L14 9" stroke="#605e5c" strokeWidth="1.600" />
                  </Svg>
                  Format painter
                </button>
              </div>
            </div>
          </RibbonGroup>
          {ribbon.map((g) => (
            <RibbonGroup key={g.name} {...g} />
          ))}
          <button aria-label="Collapse ribbon" className="mr-[6px] mb-1.5 ml-auto rotate-180 self-end">
            <Chevron w={11} h={7} />
          </button>
        </div>
      </div>

      <div className="flex min-h-0 flex-1">
        <nav className="flex w-[51px] shrink-0 flex-col border-r border-[#e1dfdd]">
          <button aria-label="Report view" className="flex h-[50px] items-center border-l-[3px] border-[#117865] pl-[13px]">
            <Svg w={18} h={18}>
              <path d="M1 0V17H18" stroke={D} strokeWidth="1.500" />
              <path d="M4 4H7V15H4ZM9 8H12V15H9ZM14 2H17V15H14Z" stroke={D} strokeWidth="1.300" />
            </Svg>
          </button>
          <button aria-label="Data view" className="flex h-12 items-center pl-[15px]">
            <Svg w={21} h={20}>
              <path d="M1 1H20V19H1ZM1 5H20M1 9.500H20M1 14H20M7 5V19M14 5V19" stroke="#605e5c" strokeWidth="1.300" />
            </Svg>
          </button>
          <button aria-label="Model view" className="flex h-[52px] items-center pl-[14px]">
            <Svg w={23} h={23}>
              <path d="M1 7H10V17H1ZM14 1H23V9H14ZM14 14H23V22H14ZM1 10H10M14 3.500H23M14 16.500H23M5 7V3H14M5 17V20H14" stroke="#605e5c" strokeWidth="1.300" />
            </Svg>
          </button>
        </nav>

        <div className="flex min-w-0 flex-1 flex-col">
          <div className="flex min-h-0 flex-1">
            <Report />
            <aside className="flex w-[41px] shrink-0 flex-col items-center border-l border-[#a19f9d] bg-white pt-4">
              <button aria-label="Expand filters">
                <Double left />
              </button>
              <Svg w={15} h={15} className="mt-[19px] ml-1.5">
                <path d="M14 1V14L8 9H1V6H8Z" stroke={D} strokeWidth="1.500" />
              </Svg>
              <h2 className="mt-2.5 text-[18px] leading-6 font-semibold [writing-mode:vertical-rl]">Filters</h2>
            </aside>
          </div>
          <div className="flex h-11 shrink-0 items-start text-[14px]">
            <button aria-label="Previous page" className="flex h-[42px] w-[21px] items-center pl-[7px]">
              <Svg w={6} h={10}><path d="M6 0V10L0 5Z" fill="#c8c6c4" /></Svg>
            </button>
            <button aria-label="Next page" className="flex h-[42px] w-7 items-center pl-[14px]">
              <Svg w={6} h={10}><path d="M0 0V10L6 5Z" fill="#c8c6c4" /></Svg>
            </button>
            <button className="h-11 w-[95px] border-b-[5px] border-l border-b-[#117865] border-l-[#c8c6c4] bg-white pt-[3px] font-medium">Page 1</button>
            <button aria-label="New page" className="mt-0.5 flex h-10 w-[49px] items-center justify-center bg-[#117865]">
              <Svg w={14} h={14}><path d="M7 0V14M0 7H14" stroke="white" strokeWidth="3.500" /></Svg>
            </button>
          </div>
        </div>

        <div className="flex border-l border-[#e1dfdd]">
          <Visualizations />
          <DataPane />
        </div>
      </div>

      <div className="flex h-[30px] shrink-0 items-center border-t border-[#e1dfdd] pr-[29px] pl-[7px] text-[14px] text-[#484644]">
        <span>Page 1 of 1</span>
        <button aria-label="Zoom out" className="mr-[5px] ml-auto">
          <Svg w={6} h={10}><path d="M0 5H6" stroke={D} strokeWidth="2" /></Svg>
        </button>
        <span className="relative flex items-center">
          <input
            type="range"
            aria-label="Zoom"
            min="0"
            max="200"
            defaultValue="82"
            className="h-[14px] w-[125px] appearance-none bg-transparent [&::-webkit-slider-runnable-track]:h-px [&::-webkit-slider-runnable-track]:bg-[#605e5c] [&::-webkit-slider-thumb]:-mt-[6px] [&::-webkit-slider-thumb]:h-[13px] [&::-webkit-slider-thumb]:w-[5px] [&::-webkit-slider-thumb]:appearance-none [&::-webkit-slider-thumb]:bg-[#605e5c]"
          />
          <span className="pointer-events-none absolute left-1/2 h-[7px] w-0.5 bg-[#605e5c]" />
        </span>
        <button aria-label="Zoom in" className="ml-2">
          <Svg w={10} h={10}><path d="M0 5H10M5 0V10" stroke="#484644" strokeWidth="1.700" /></Svg>
        </button>
        <span className="ml-[21px] w-[52px] text-[#605e5c]">84%</span>
        <button aria-label="Fit to page">
          <Svg w={20} h={16}>
            <rect x="1" y="1" width="18" height="14" stroke="#605e5c" strokeWidth="1.400" />
            <path d="M4 6V4H7M13 4H16V6M16 10V12H13M7 12H4V10" stroke="#605e5c" strokeWidth="1.300" />
          </Svg>
        </button>
      </div>

      <Taskbar />

      <div className="pointer-events-none absolute right-[82px] bottom-[96px] z-20 w-[284px] whitespace-nowrap text-[#b9b8b7]">
        <div className="text-[24px] leading-8">Activate Windows</div>
        <div className="text-[17px] leading-7">Go to Settings to activate Windows.</div>
      </div>
    </div>
  );
}
